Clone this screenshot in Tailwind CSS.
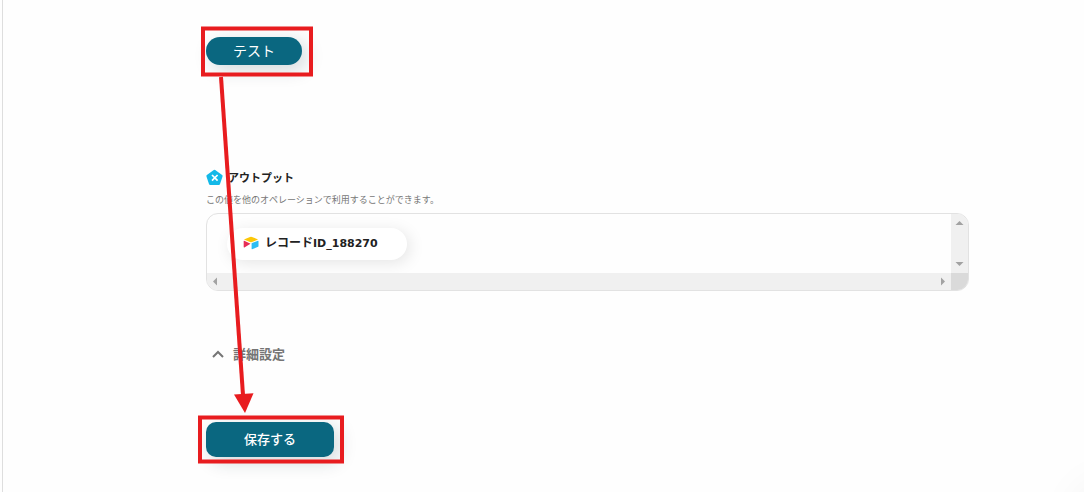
<!DOCTYPE html>
<html lang="ja">
<head>
<meta charset="utf-8">
<meta name="viewport" content="width=device-width, initial-scale=1">
<title>アウトプット</title>
<script src="https://cdn.jsdelivr.net/npm/@tailwindcss/browser@4"></script>
</head>
<body class="bg-[#fefefe] font-['Noto_Sans_CJK_JP',sans-serif] text-[#222]">
<div class="relative flex min-h-screen overflow-hidden pl-0.5">
  <main class="min-w-0 grow border-l border-[#dedede] pt-[37px] pr-[115px] pb-8 pl-[203px]">
    <button type="button" class="flex h-7 w-24 items-center justify-center rounded-full bg-[#0a6780] pb-0.5 text-sm text-white shadow-[5px_5px_18px_rgba(10,50,60,0.18)]">テスト</button>

    <section class="mt-[102px]">
      <h2 class="flex h-5 items-center gap-[5px] text-[11px] font-bold">
        <svg class="size-[17px] shrink-0" viewBox="0 0 17 17" aria-hidden="true">
          <path d="M8.5 1.900 15.400 7 12.800 14.800H4.200L1.600 7Z" fill="#14b9e8" stroke="#14b9e8" stroke-width="2.400" stroke-linejoin="round"/>
          <path d="m6 6 5.600 5.600M11.600 6 6 11.600" stroke="#fff" stroke-width="1.700" fill="none"/>
        </svg>
        アウトプット
      </h2>
      <p class="mt-[7px] text-[9px] leading-3 text-[#777]">この値を他のオペレーションで利用することができます。</p>

      <div class="mt-[7px] grid grid-cols-[1fr_17px] overflow-hidden rounded-xl border border-[#e2e2e2]">
        <div class="h-[59px] overflow-hidden pt-3.5 pl-5 pb-3">
          <div class="flex h-8 w-[180px] items-center gap-1.5 rounded-full bg-white pl-4 pb-0.5 text-xs font-bold shadow-[3px_3px_16px_rgba(0,0,0,0.1)]">
            <svg class="h-[14px] w-4 shrink-0" viewBox="0 0 16 14" aria-hidden="true">
              <path d="M7 .9 1.500 3.200q-.6.3 0 .6L7 6.100q1 .4 2 0l5.500-2.300q.6-.3 0-.6L9 .9Q8 .5 7 .9Z" fill="#fcc707"/>
              <path d="M8.600 7.600v5.200q0 .6.500.400l6-2.400q.400-.2.400-.6V5.200q0-.6-.5-.4l-6 2.300q-.4.200-.4.500Z" fill="#2cbdf3"/>
              <path d="M.7 5.100v6q.1.600.700.300l5.700-3.300q.5-.4 0-.7L1.200 4.800Q.7 4.600.7 5.100Z" fill="#e62e56"/>
            </svg>
            <span class="whitespace-nowrap">レコード<span class="font-['DejaVu_Sans',sans-serif] text-[11px]">ID_188270</span></span>
          </div>
        </div>
        <div class="flex flex-col items-center justify-between bg-[#f0f0f0]">
          <button type="button" aria-label="上へスクロール" class="flex size-[17px] items-center justify-center"><svg class="size-[17px]" viewBox="0 0 17 17"><path d="M4.500 11h8L8.500 7Z" fill="#a2a2a2"/></svg></button>
          <button type="button" aria-label="下へスクロール" class="flex size-[17px] items-center justify-center"><svg class="size-[17px]" viewBox="0 0 17 17"><path d="M4.500 6h8l-4 4Z" fill="#a2a2a2"/></svg></button>
        </div>
        <div class="flex h-[17px] justify-between bg-[#f0f0f0]">
          <button type="button" aria-label="左へスクロール" class="size-[17px]"><svg class="size-[17px]" viewBox="0 0 17 17"><path d="M10 4.500v8L6 8.500Z" fill="#a2a2a2"/></svg></button>
          <button type="button" aria-label="右へスクロール" class="size-[17px]"><svg class="size-[17px]" viewBox="0 0 17 17"><path d="M7 4.500v8l4-4Z" fill="#a2a2a2"/></svg></button>
        </div>
        <div class="bg-[#dadada]"></div>
      </div>
    </section>

    <button type="button" aria-expanded="false" class="mt-[53px] flex h-5 items-center gap-[3px] text-[13px] font-bold text-[#757575]">
      <svg class="size-6" viewBox="0 0 24 24" fill="none" stroke="#757575" stroke-width="2" aria-hidden="true"><path d="m7 15 5-5 5 5"/></svg>
      詳細設定
    </button>

    <button type="button" class="mt-[58px] flex h-[35px] w-32 items-center justify-center rounded-[10px] bg-[#0a6780] pb-0.5 text-[13px] font-medium text-white shadow-[5px_5px_18px_rgba(10,50,60,0.18)]">保存する</button>
  </main>

  <!-- Annotation overlay: highlighted buttons and the arrow between them -->
  <svg class="pointer-events-none absolute top-0 left-0 h-[492px] w-[400px]" viewBox="0 0 400 492" fill="none" aria-hidden="true">
    <rect x="203" y="28.500" width="108" height="46" stroke="#e81c1f" stroke-width="4"/>
    <rect x="200" y="417.500" width="142" height="44" stroke="#e81c1f" stroke-width="4"/>
    <path d="M221 77 243 395" stroke="#e81c1f" stroke-width="4"/>
    <path d="M234 394.500 253.500 393.300 245 413Z" fill="#e81c1f"/>
  </svg>
  <div class="pointer-events-none absolute -right-20 -bottom-20 size-24 rounded-full bg-[#fafafa] shadow-[0_0_40px_rgba(0,0,0,0.04)]"></div>
</div>
</body>
</html>
